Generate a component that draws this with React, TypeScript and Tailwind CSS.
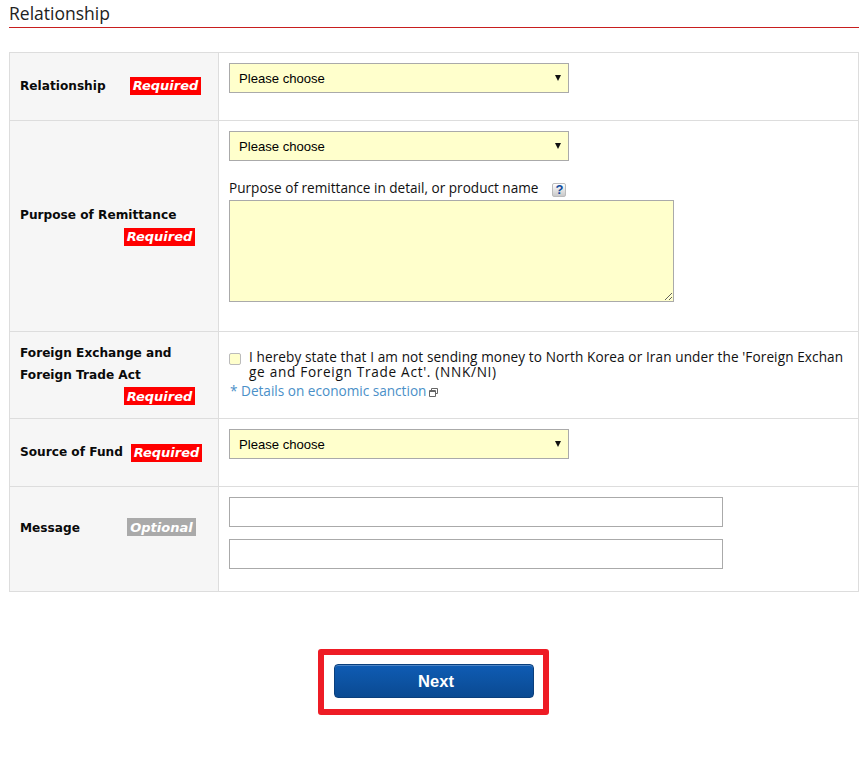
const bodyFont = "font-['Open_Sans','Noto_Sans',sans-serif]";

function Tag({ label = 'Required', grey = false }: { label?: string; grey?: boolean }) {
  return (
    <span
      className={`inline-flex h-[18px] items-center justify-center font-['DejaVu_Sans',sans-serif] text-[13px] font-bold italic leading-none text-white ${
        grey ? 'w-[69px] bg-[#aaaaaa]' : 'w-[71px] bg-[#ff0000]'
      }`}
    >
      {label}
    </span>
  );
}

function Select() {
  return (
    <div className="relative h-[30px] w-[340px]">
      <select className="h-full w-full appearance-none rounded-none border border-[#aaaaaa] bg-[#ffffcc] pl-[9px] pt-[2px] font-['Liberation_Sans',sans-serif] text-[13.1px] text-black outline-none">
        <option>Please choose</option>
      </select>
      <span className="pointer-events-none absolute right-[8px] top-[12px] h-0 w-0 border-x-[3px] border-t-[6px] border-x-transparent border-t-[#111111]" />
    </div>
  );
}

function Row({
  heading,
  className,
  children,
}: {
  heading: React.ReactNode;
  className: string;
  children: React.ReactNode;
}) {
  return (
    <div className={`flex border-b border-[#dddddd] last:border-b-0 ${className}`}>
      <div className="flex w-[209px] shrink-0 flex-col justify-center border-r border-[#dddddd] bg-[#f6f6f6] pl-[10px] font-['DejaVu_Sans',sans-serif] text-[12.15px] font-bold leading-[22px] text-[#0a0a0a]">
        {heading}
      </div>
      <div className="min-w-0 flex-1 pl-[10px]">{children}</div>
    </div>
  );
}

export default function App() {
  return (
    <div className={`h-[759px] w-[864px] overflow-hidden bg-white ${bodyFont}`}>
      <div className="ml-[9px] w-[850px]">
        <h2 className="h-[28px] border-b border-[#c81e1e] pt-[1px] text-[17.5px] font-normal leading-[24px] text-[#222222]">
          Relationship
        </h2>

        <div className="mt-[24px] border border-[#dddddd]">
          <Row
            className="h-[68px]"
            heading={
              <div className="flex items-center justify-between pb-[2px] pr-[17px]">
                <span>Relationship</span>
                <Tag />
              </div>
            }
          >
            <div className="pt-[10px]">
              <Select />
            </div>
          </Row>

          <Row
            className="h-[211px]"
            heading={
              <div className="pb-[3px] pr-[23px]">
                <div>Purpose of Remittance</div>
                <div className="mt-[2px] flex justify-end">
                  <Tag />
                </div>
              </div>
            }
          >
            <div className="pt-[10px]">
              <Select />
              <div className="mt-[17px] flex h-[20px] items-center text-[13.6px] text-[#111111]">
                <span>Purpose of remittance in detail, or product name</span>
                <span className="ml-[14px] mt-[3px] flex h-[14px] w-[14px] items-center justify-center rounded-[2px] border border-[#bbbbbb] bg-gradient-to-b from-white to-[#c9c9c9] font-['Liberation_Sans',sans-serif] text-[13px] font-bold leading-none text-[#0f4a9e]">
                  ?
                </span>
              </div>
              <textarea className="mt-[2px] block h-[102px] w-[445px] rounded-none border border-[#aaaaaa] bg-[#ffffcc] outline-none" />
            </div>
          </Row>

          <Row
            className="h-[87px]"
            heading={
              <div className="pb-[3px] pr-[23px]">
                <div>Foreign Exchange and</div>
                <div>Foreign Trade Act</div>
                <div className="mt-[1px] flex justify-end">
                  <Tag />
                </div>
              </div>
            }
          >
            <div className="flex pt-[17px]">
              <span className="mt-[4px] h-[12px] w-[12px] shrink-0 rounded-[2px] border border-[#bbbbbb] bg-[#ffffcc]" />
              <p className="ml-[8px] w-[596px] break-all text-[13.6px] leading-[15px] tracking-[0.1px] text-[#111111]">
                I hereby state that I am not sending money to North Korea or Iran under the 'Foreign Exchan
                <span className="tracking-[0.7px]">ge and Foreign Trade Act'. (NNK/NI)</span>
              </p>
            </div>
            <div className="mt-[3px] flex items-center text-[13.6px] leading-[18px] text-[#4a90c8]">
              <span className="ml-[1px]">* Details on economic sanction</span>
              <svg className="ml-[3px] mt-[2px]" width="9" height="9" viewBox="0 0 9 9" fill="none" stroke="#666666">
                <path d="M2.5 2.5V.5h6v5h-2" />
                <path d="M.5 2.5h6v6h-6z" />
                <path d="M.5 3.5h6" />
              </svg>
            </div>
          </Row>

          <Row
            className="h-[68px]"
            heading={
              <div className="flex items-center justify-between pr-[16px]">
                <span className="pb-[2px]">Source of Fund</span>
                <Tag />
              </div>
            }
          >
            <div className="pt-[10px]">
              <Select />
            </div>
          </Row>

          <Row
            className="h-[104px]"
            heading={
              <div className="flex items-center justify-between pb-[24px] pr-[22px]">
                <span className="pt-[2px]">Message</span>
                <Tag label="Optional" grey />
              </div>
            }
          >
            <div className="flex flex-col gap-[12px] pt-[10px]">
              <input className="h-[30px] w-[494px] rounded-none border border-[#aaaaaa] bg-white outline-none" />
              <input className="h-[30px] w-[494px] rounded-none border border-[#aaaaaa] bg-white outline-none" />
            </div>
          </Row>
        </div>
      </div>

      <div className="ml-[318px] mt-[57px] w-[231px]">
        <div className="rounded-[3px] border-[6px] border-[#ee1c25] pb-[11px] pl-[10px] pt-[9px]">
          <button className="block h-[34px] w-[200px] rounded-[4px] border border-[#0a3f7c] bg-gradient-to-b from-[#0f5cb4] to-[#0a4a92] pl-[4px] font-['Liberation_Sans',sans-serif] text-[16.5px] font-bold text-white shadow-[inset_0_1px_0_#4f86c6]">
            Next
          </button>
        </div>
      </div>
    </div>
  );
}
